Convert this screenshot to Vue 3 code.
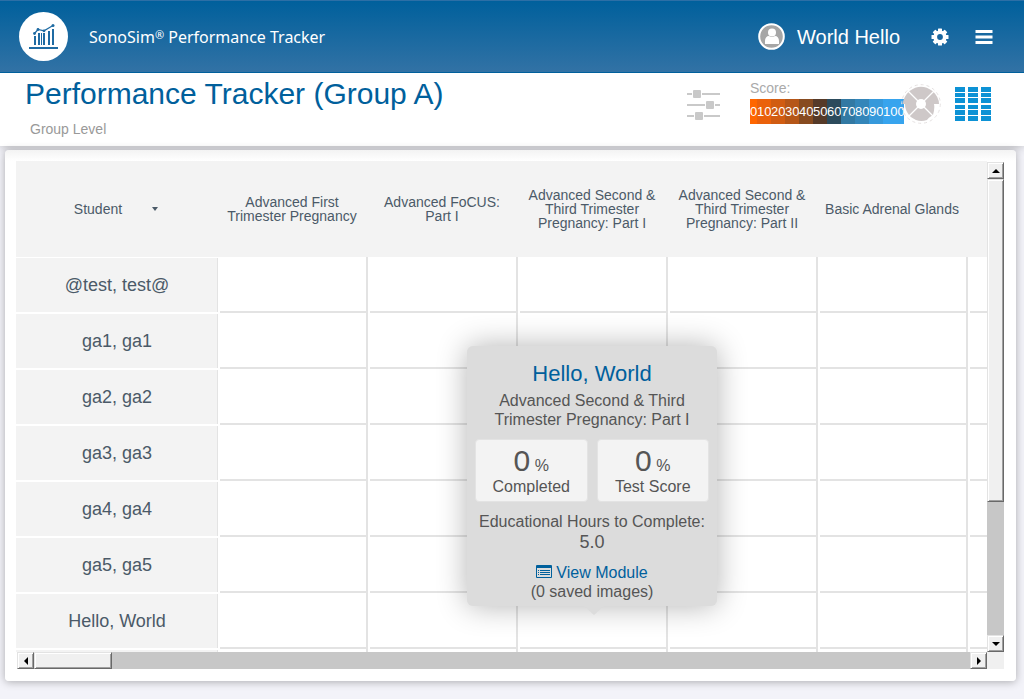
<script setup>
import { ref } from 'vue'

const scoreSteps = [
  { label: '0', color: '#ff6600' },
  { label: '10', color: '#ea610b' },
  { label: '20', color: '#d15c12' },
  { label: '30', color: '#b55618' },
  { label: '40', color: '#874b20' },
  { label: '50', color: '#563a28' },
  { label: '60', color: '#2c4b5c' },
  { label: '70', color: '#3279a3' },
  { label: '80', color: '#3486b9' },
  { label: '90', color: '#3699db' },
  { label: '100', color: '#37a4ee' },
]

const modules = [
  'Advanced First Trimester Pregnancy',
  'Advanced FoCUS: Part I',
  'Advanced Second & Third Trimester Pregnancy: Part I',
  'Advanced Second & Third Trimester Pregnancy: Part II',
  'Basic Adrenal Glands',
  '',
]

const students = ['@test, test@', 'ga1, ga1', 'ga2, ga2', 'ga3, ga3', 'ga4, ga4', 'ga5, ga5', 'Hello, World', '']

const selected = ref({
  name: 'Hello, World',
  module: 'Advanced Second & Third Trimester Pregnancy: Part I',
  stats: [
    { value: 0, label: 'Completed' },
    { value: 0, label: 'Test Score' },
  ],
  hours: '5.0',
  images: 0,
})

const tileRows = [
  { y: 0, h: 5 },
  { y: 6, h: 4 },
  { y: 11, h: 5 },
  { y: 18, h: 4 },
  { y: 23, h: 5 },
  { y: 29, h: 5 },
]
const tileCols = [0, 13, 26]
</script>

<template>
  <div class="page">
    <header class="topbar">
      <a class="brand" href="#">
        <svg class="logo" viewBox="0 0 49 49" aria-hidden="true">
          <circle cx="24.5" cy="24.5" r="24.5" fill="#fff" />
          <g fill="#1f6ba3">
            <rect x="10" y="35" width="29" height="2" />
            <rect x="15" y="24" width="2" height="9" />
            <rect x="19" y="21" width="2" height="12" />
            <rect x="22" y="21" width="1" height="12" />
            <rect x="24" y="21" width="2" height="12" />
            <rect x="29" y="19" width="2" height="14" />
            <rect x="33" y="17" width="2" height="16" />
            <circle cx="15.5" cy="21.5" r="1.4" />
            <circle cx="19" cy="17.5" r="1.4" />
            <circle cx="25" cy="18.8" r="1.4" />
            <circle cx="34" cy="13.5" r="1.5" />
          </g>
          <path d="M15.500 21.500L19 17.500L25 18.800L34 13.500" fill="none" stroke="#1f6ba3" stroke-width="1.200" />
        </svg>
        <span class="brand-name">SonoSim<sup>®</sup> Performance Tracker</span>
      </a>
      <div class="account">
        <svg class="avatar" viewBox="0 0 27 27" aria-hidden="true">
          <circle cx="13.5" cy="13.5" r="12.3" fill="#a6a6a6" stroke="#fff" stroke-width="2" />
          <circle cx="14" cy="9.500" r="4" fill="#fff" />
          <path d="M7 21v-3c0-3 1.500-5 4-5c2 1.300 4 1.300 6 0c2.500 0 4 2 4 5v3z" fill="#fff" />
        </svg>
        <span class="user">World Hello</span>
        <button class="icon-btn gear" aria-label="Settings">
          <svg viewBox="0 0 18 18">
            <g fill="#fff">
              <rect v-for="a in [0, 45, 90, 135]" :key="a" x="7" y="0.5" width="4" height="17" rx="0.6" :transform="`rotate(${a} 9 9)`" />
              <circle cx="9" cy="9" r="6.6" />
            </g>
            <circle cx="9" cy="9" r="2.9" fill="#19669f" />
          </svg>
        </button>
        <button class="icon-btn" aria-label="Menu">
          <svg viewBox="0 0 18 18"><path d="M0.500 3.500h17M0.500 9h17M0.500 14.500h17" stroke="#fff" stroke-width="3" /></svg>
        </button>
      </div>
    </header>

    <section class="titlebar">
      <div class="titles">
        <h1>Performance Tracker (Group A)</h1>
        <p>Group Level</p>
      </div>
      <div class="tools">
        <button class="tool filter" aria-label="Filters">
          <svg viewBox="0 0 34 32">
            <g fill="#c9c9c9">
              <rect y="4" width="33" height="2" /><rect y="15" width="33" height="2" /><rect y="26" width="33" height="2" />
            </g>
            <g fill="#fff"><rect x="5" y="0" width="10" height="9" /><rect x="18" y="11" width="10" height="9" /><rect x="7" y="22" width="10" height="9" /></g>
            <g fill="#c9c9c9">
              <rect x="6" y="1" width="8" height="8" rx="1" /><rect x="19" y="12" width="8" height="8" rx="1" /><rect x="8" y="23" width="8" height="8" rx="1" />
            </g>
          </svg>
        </button>
        <div class="score">
          <span class="score-label">Score:</span>
          <div class="scale">
            <span v-for="s in scoreSteps" :key="s.label" :class="'digits-' + s.label.length" :style="{ background: s.color }">{{ s.label }}</span>
          </div>
        </div>
        <button class="tool wheel" aria-label="Wheel view">
          <svg viewBox="0 0 40 40">
            <circle cx="20" cy="20" r="19.3" fill="none" stroke="#e6e2e2" stroke-width="1" stroke-dasharray="3 3" />
            <path d="M8.500 7Q20 -1.500 31.500 7Q38 13 38 20H33Q34 24 32 31Q27 34 26 36Q20 38 15 36Q9 33 8 31Q4 26 4 20H1.500Q3 12 8.500 7z" fill="#cec8c8" />
            <path d="M7 7L33 33M33 7L7 33" stroke="#fff" stroke-width="1.300" />
            <circle cx="20" cy="20" r="5" fill="#fff" />
          </svg>
        </button>
        <button class="tool tiles" aria-label="Grid view">
          <svg viewBox="0 0 36 34">
            <g v-for="r in tileRows" :key="r.y" fill="#0d92d5">
              <rect v-for="x in tileCols" :key="x" :x="x" :y="r.y" width="10" :height="r.h" />
            </g>
          </svg>
        </button>
      </div>
    </section>

    <main class="card">
      <div class="board">
        <div class="pane">
          <table>
            <colgroup><col class="col-name" /><col v-for="(m, i) in modules" :key="i" class="col-module" /></colgroup>
            <thead>
              <tr>
                <th scope="col"><button class="sort">Student <span class="caret"></span></button></th>
                <th v-for="(m, i) in modules" :key="i" scope="col">{{ m }}</th>
              </tr>
            </thead>
            <tbody>
              <tr v-for="s in students" :key="s">
                <th scope="row">{{ s }}</th>
                <td v-for="(m, i) in modules" :key="i"><div class="cell"></div></td>
              </tr>
            </tbody>
          </table>
        </div>
        <div class="bar vertical">
          <button class="arrow" aria-label="Scroll up"><svg viewBox="0 0 8 4"><path d="M4 0L8 4H0z" /></svg></button>
          <div class="thumb"></div>
          <div class="track"></div>
          <button class="arrow" aria-label="Scroll down"><svg viewBox="0 0 8 4"><path d="M0 0H8L4 4z" /></svg></button>
        </div>
        <div class="bar horizontal">
          <button class="arrow" aria-label="Scroll left"><svg class="side" viewBox="0 0 4 8"><path d="M4 0V8L0 4z" /></svg></button>
          <div class="thumb"></div>
          <div class="track"></div>
          <button class="arrow" aria-label="Scroll right"><svg class="side" viewBox="0 0 4 8"><path d="M0 0V8L4 4z" /></svg></button>
        </div>
        <div class="corner"></div>

        <aside class="popup">
          <h2>{{ selected.name }}</h2>
          <p class="module">{{ selected.module }}</p>
          <div class="stats">
            <div v-for="s in selected.stats" :key="s.label" class="stat">
              <div class="figure"><b>{{ s.value }}</b> %</div>
              <div>{{ s.label }}</div>
            </div>
          </div>
          <p class="hours">Educational Hours to Complete:<br /><span>{{ selected.hours }}</span></p>
          <p class="view">
            <a href="#"><svg viewBox="0 0 16 13" aria-hidden="true">
              <rect x="0" y="0" width="16" height="13" rx="1" fill="#00609c" />
              <rect x="1" y="3" width="14" height="9" fill="#dcdcdc" />
              <path d="M2 5.500h1M4 5.500h10M2 7.500h1M4 7.500h10M2 9.500h1M4 9.500h10" stroke="#00609c" stroke-width="1" />
            </svg>View Module</a><br />
            ({{ selected.images }} saved images)
          </p>
        </aside>
      </div>
    </main>
  </div>
</template>

<style>
body {
  margin: 0;
  background: #f3f3f9;
}
</style>

<style scoped>
* {
  box-sizing: border-box;
}
.page {
  display: flex;
  flex-direction: column;
  height: 100vh;
  overflow: hidden;
  font-family: "Liberation Sans", Arial, sans-serif;
  color: #4b5a68;
}
h1, h2, p {
  margin: 0;
  font-weight: 400;
}
button {
  padding: 0;
  border: 0;
  background: none;
  color: inherit;
  font: inherit;
}
svg {
  display: block;
}
.topbar {
  display: flex;
  position: relative;
  z-index: 1;
  flex: none;
  align-items: center;
  justify-content: space-between;
  height: 73px;
  padding: 0 31px 0 19px;
  border-top: 1px solid #2c6fa6;
  border-bottom: 1px solid #00609c;
  background: linear-gradient(#00609c, #3272a5);
  color: #fff;
}
.brand {
  display: flex;
  align-items: center;
  gap: 21px;
  color: #fff;
  text-decoration: none;
}
.logo {
  width: 49px;
  height: 49px;
}
.brand-name {
  font: 16px/24px "Noto Sans", "Open Sans", sans-serif;
}
.brand-name sup {
  font-size: 11px;
  line-height: 0;
  vertical-align: 4px;
}
.account {
  display: flex;
  align-items: center;
}
.avatar {
  width: 27px;
  height: 27px;
}
.user {
  margin: 0 31px 0 12px;
  font-size: 20px;
  line-height: 24px;
}
.icon-btn {
  width: 18px;
}
.gear {
  margin-right: 26px;
}
.titlebar {
  display: flex;
  flex: none;
  justify-content: space-between;
  height: 73px;
  padding: 0 33px 0 25px;
  background: #fff;
  box-shadow: 0 0 10px rgba(0, 0, 0, 0.3);
}
h1 {
  margin-top: 3px;
  color: #00609c;
  font-size: 30px;
  line-height: 36px;
}
.titles p {
  margin: 8px 0 0 5px;
  color: #999;
  font-size: 14px;
  line-height: 18px;
}
.tools {
  display: flex;
  align-items: flex-start;
}
.filter {
  width: 34px;
  margin: 16px 29px 0 0;
}
.score-label {
  display: block;
  margin-top: 5px;
  margin-bottom: 1px;
  color: #aaa;
  font-size: 14px;
  line-height: 20px;
}
.scale {
  display: flex;
  color: #fff;
  font-size: 13px;
  line-height: 25px;
  text-align: center;
}
.digits-1 {
  width: 7px;
}
.digits-2 {
  width: 14px;
}
.digits-3 {
  width: 21px;
}
.wheel {
  width: 40px;
  margin: 11px 14px 0 -3px;
}
.tiles {
  width: 36px;
  margin-top: 14px;
}
.card {
  flex: 1;
  min-height: 0;
  margin: 4px 8px 18px 5px;
  padding: 11px 12px 12px 11px;
  border-radius: 4px;
  background: linear-gradient(#f3f3f3, #fff 11px);
  box-shadow: 0 1px 8px rgba(0, 0, 0, 0.3);
}
.board {
  display: grid;
  position: relative;
  grid-template-columns: minmax(0, 1fr) 17px;
  grid-template-rows: minmax(0, 1fr) 17px;
  height: 100%;
}
.pane {
  overflow: hidden;
}
table {
  width: 1102px;
  border-spacing: 0;
  table-layout: fixed;
}
.col-name {
  width: 202px;
}
.col-module {
  width: 150px;
}
th, td {
  padding: 0;
  font-weight: 400;
}
thead th {
  height: 96px;
  padding: 0 8px 0 6px;
  background: #f3f3f3;
  font-size: 14px;
  line-height: 14px;
}
.sort {
  display: inline-flex;
  align-items: center;
  gap: 30px;
}
.caret {
  border: 3px solid transparent;
  border-top: 4px solid #4b5a68;
  border-bottom: 0;
}
tbody th {
  height: 56px;
  border: solid #fff;
  border-width: 1px 0;
  background: #f3f3f3;
  box-shadow: inset -1px 0 #e3e3e3;
  font-size: 18px;
}
td {
  padding-left: 2px;
  border-right: 2px solid #e3e3e3;
}
.cell {
  height: 56px;
  border-bottom: 2px solid #e3e3e3;
}
.bar {
  display: flex;
  background: #c7c7c7;
}
.vertical {
  flex-direction: column;
  margin-top: 1px;
}
.horizontal {
  margin-left: 1px;
}
.arrow, .thumb {
  display: flex;
  flex: none;
  align-items: center;
  justify-content: center;
  width: 17px;
  height: 17px;
  border: 1px solid #e3e3e3;
  border-right-color: #696969;
  border-bottom-color: #696969;
  background: #f0f0f0;
  box-shadow: inset 1px 1px #fff, inset -1px -1px #a0a0a0;
}
.arrow svg {
  width: 8px;
  height: 4px;
  fill: #000;
}
.arrow .side {
  width: 4px;
  height: 8px;
}
.vertical .thumb {
  height: 66%;
}
.horizontal .thumb {
  width: 8%;
}
.track {
  flex: 1;
}
.corner {
  background: #f0f0f0;
}
.popup {
  position: absolute;
  top: 185px;
  left: 451px;
  width: 250px;
  padding: 15px 8px 5px;
  border-radius: 6px;
  background: #dcdcdc;
  box-shadow: 0 0 30px rgba(0, 0, 0, 0.3);
  color: #555;
  font-size: 16px;
  line-height: 19px;
  text-align: center;
}
.popup::after {
  content: "";
  position: absolute;
  top: 100%;
  left: 117px;
  border: 10px solid transparent;
  border-top: 9px solid #dcdcdc;
  border-bottom: 0;
}
h2 {
  color: #00609c;
  font-size: 22px;
  line-height: 26px;
}
.module {
  margin: 4px 16px 0;
}
.stats {
  display: flex;
  gap: 9px;
  margin: 10px 0;
}
.stat {
  flex: 1;
  padding: 8px 0 5px;
  border: 1px solid #e3e3e3;
  border-radius: 4px;
  background: #f3f3f3;
}
.figure {
  height: 29px;
  line-height: 26px;
}
.figure b {
  font-size: 30px;
  font-weight: 400;
}
.hours {
  line-height: 20px;
}
.hours span {
  font-size: 18px;
}
.view {
  margin-top: 10px;
}
.view a {
  color: #00609c;
  text-decoration: none;
}
.view svg {
  display: inline-block;
  width: 16px;
  height: 13px;
  margin-right: 4px;
}
</style>
